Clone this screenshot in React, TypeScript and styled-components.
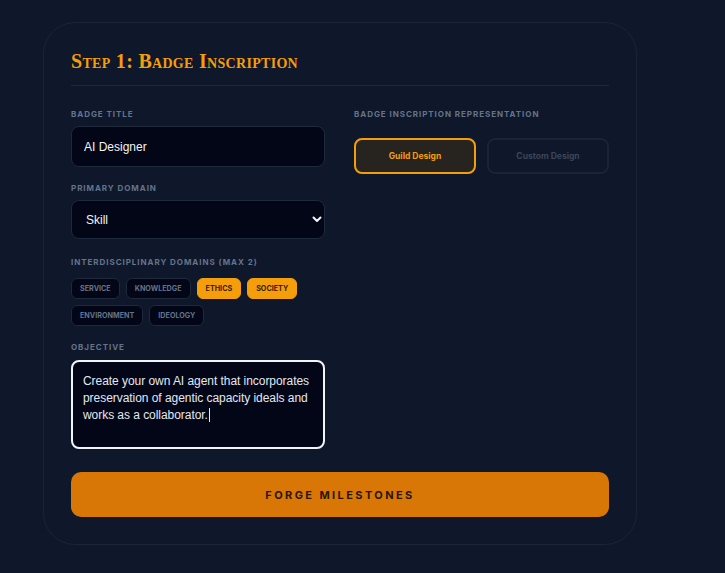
import React from 'react'
import styled, { createGlobalStyle } from 'styled-components'

const GlobalStyle = createGlobalStyle`
    html, body {
        margin: 0;
        padding: 0;
        background: #0f172a;
        font-family: Inter, "Liberation Sans", sans-serif;
    }
    * { box-sizing: border-box; }
`;

const Page = styled.div`
    width: 725px;
    height: 573px;
    padding: 22px 0 0 43px;
`;
const Card = styled.div`
    width: 594px;
    height: 523px;
    border: 1px solid #1c2538;
    border-radius: 32px;
    background: #0f172a;
    padding: 27px 27px 0 27px;
`;
const Title = styled.h2`
    margin: 0;
    padding-bottom: 12px;
    border-bottom: 1px solid #1e293b;
    font-family: "Liberation Serif", serif;
    font-variant: small-caps;
    font-weight: 700;
    font-size: 20px;
    line-height: 23px;
    letter-spacing: 0.3px;
    color: #f59e0b;
`;
const Columns = styled.div`
    display: grid;
    grid-template-columns: 254px 255px;
    column-gap: 29px;
    margin-top: 23px;
`;
const Column = styled.div`
    display: flex;
    flex-direction: column;
`;
const Field = styled.div<{ $gap?: number }>`
    display: flex;
    flex-direction: column;
    margin-bottom: ${p => p.$gap ?? 16}px;
`;
const Label = styled.label<{ $space?: number }>`
    font-size: 8px;
    line-height: 11px;
    font-weight: 700;
    letter-spacing: 0.95px;
    text-transform: uppercase;
    color: #64748b;
    margin-bottom: ${p => p.$space ?? 7}px;
`;
const TextInput = styled.input`
    height: 41px;
    border: 1px solid #1e293b;
    border-radius: 8px;
    background: #020617;
    color: #f1f5f9;
    font-family: "Liberation Sans", Arial, sans-serif;
    font-size: 12px;
    font-weight: 500;
    padding: 0 12px;
    outline: none;
`;
const SelectWrap = styled.div`
    position: relative;
    height: 39px;
`;
const Select = styled.select`
    width: 100%;
    height: 100%;
    appearance: none;
    border: 1px solid #1e293b;
    border-radius: 8px;
    background: #020617;
    color: #f1f5f9;
    font-family: "Liberation Sans", Arial, sans-serif;
    font-size: 12px;
    font-weight: 500;
    padding: 0 14px;
    outline: none;
`;
const Chevron = styled.svg`
    position: absolute;
    right: 2px;
    top: 15px;
    pointer-events: none;
`;
const Chips = styled.div`
    display: flex;
    flex-wrap: wrap;
    gap: 6px 6px;
`;
const Chip = styled.button<{ $on?: boolean }>`
    height: 21px;
    padding: 0 8px;
    border-radius: 6px;
    border: 1px solid ${p => (p.$on ? '#f59e0b' : '#1e293b')};
    background: ${p => (p.$on ? '#f59e0b' : '#020617')};
    color: ${p => (p.$on ? '#3b1a05' : '#64748b')};
    font-family: Inter, "Liberation Sans", sans-serif;
    font-size: 7.2px;
    font-weight: 700;
    text-transform: uppercase;
`;
const Objective = styled.div`
    height: 89px;
    border: 2px solid #f1f5f9;
    border-radius: 8px;
    background: #020617;
    color: #e2e8f0;
    font-family: "Liberation Sans", Arial, sans-serif;
    font-size: 12px;
    line-height: 17px;
    letter-spacing: -0.05px;
    padding: 11px 8px 0 10px;
`;
const Caret = styled.span`
    display: inline-block;
    width: 1px;
    height: 14px;
    margin-left: 1px;
    vertical-align: -3px;
    background: #e2e8f0;
`;
const Toggle = styled.div`
    display: grid;
    grid-template-columns: 122px 122px;
    column-gap: 11px;
`;
const ToggleButton = styled.button<{ $on?: boolean }>`
    height: 36px;
    border-radius: 8px;
    border: ${p => (p.$on ? '2px solid #f59e0b' : '2px solid #1a2436')};
    background: ${p => (p.$on ? '#27231f' : 'transparent')};
    color: ${p => (p.$on ? '#f59e0b' : '#3b4658')};
    font-family: Inter, "Liberation Sans", sans-serif;
    font-size: 8.5px;
    font-weight: 700;
`;
const ForgeButton = styled.button`
    width: 538px;
    height: 45px;
    margin-top: 23px;
    border: none;
    border-radius: 10px;
    background: #d97706;
    color: #2a1607;
    font-family: Inter, "Liberation Sans", sans-serif;
    font-size: 11px;
    font-weight: 700;
    letter-spacing: 2.4px;
`;

const domains = [
    { name: 'Service', on: false },
    { name: 'Knowledge', on: false },
    { name: 'Ethics', on: true },
    { name: 'Society', on: true },
    { name: 'Environment', on: false },
    { name: 'Ideology', on: false },
];

const App = () => {
    return (
        <Page>
            <GlobalStyle />
            <Card>
                <Title>Step 1: Badge Inscription</Title>
                <Columns>
                    <Column>
                        <Field>
                            <Label $space={6}>Badge Title</Label>
                            <TextInput defaultValue="AI Designer" />
                        </Field>
                        <Field $gap={18}>
                            <Label $space={6}>Primary Domain</Label>
                            <SelectWrap>
                                <Select defaultValue="Skill">
                                    <option>Skill</option>
                                    <option>Knowledge</option>
                                </Select>
                                <Chevron width="12" height="9" viewBox="0 0 12 9">
                                    <path d="M2.5 2.5 L6 6 L9.5 2.5" fill="none" stroke="#f1f5f9" strokeWidth="2" strokeLinecap="round" strokeLinejoin="round" />
                                </Chevron>
                            </SelectWrap>
                        </Field>
                        <Field $gap={16}>
                            <Label $space={10}>Interdisciplinary Domains (Max 2)</Label>
                            <Chips>
                                {domains.map(d => (
                                    <Chip key={d.name} $on={d.on}>{d.name}</Chip>
                                ))}
                            </Chips>
                        </Field>
                        <Field $gap={0}>
                            <Label $space={7}>Objective</Label>
                            <Objective>
                                Create your own AI agent that incorporates preservation of agentic capacity ideals and works as a collaborator.<Caret />
                            </Objective>
                        </Field>
                    </Column>
                    <Column>
                        <Label $space={18}>Badge Inscription Representation</Label>
                        <Toggle>
                            <ToggleButton $on>Guild Design</ToggleButton>
                            <ToggleButton>Custom Design</ToggleButton>
                        </Toggle>
                    </Column>
                </Columns>
                <ForgeButton>FORGE MILESTONES</ForgeButton>
            </Card>
        </Page>
    )
}

export default App
